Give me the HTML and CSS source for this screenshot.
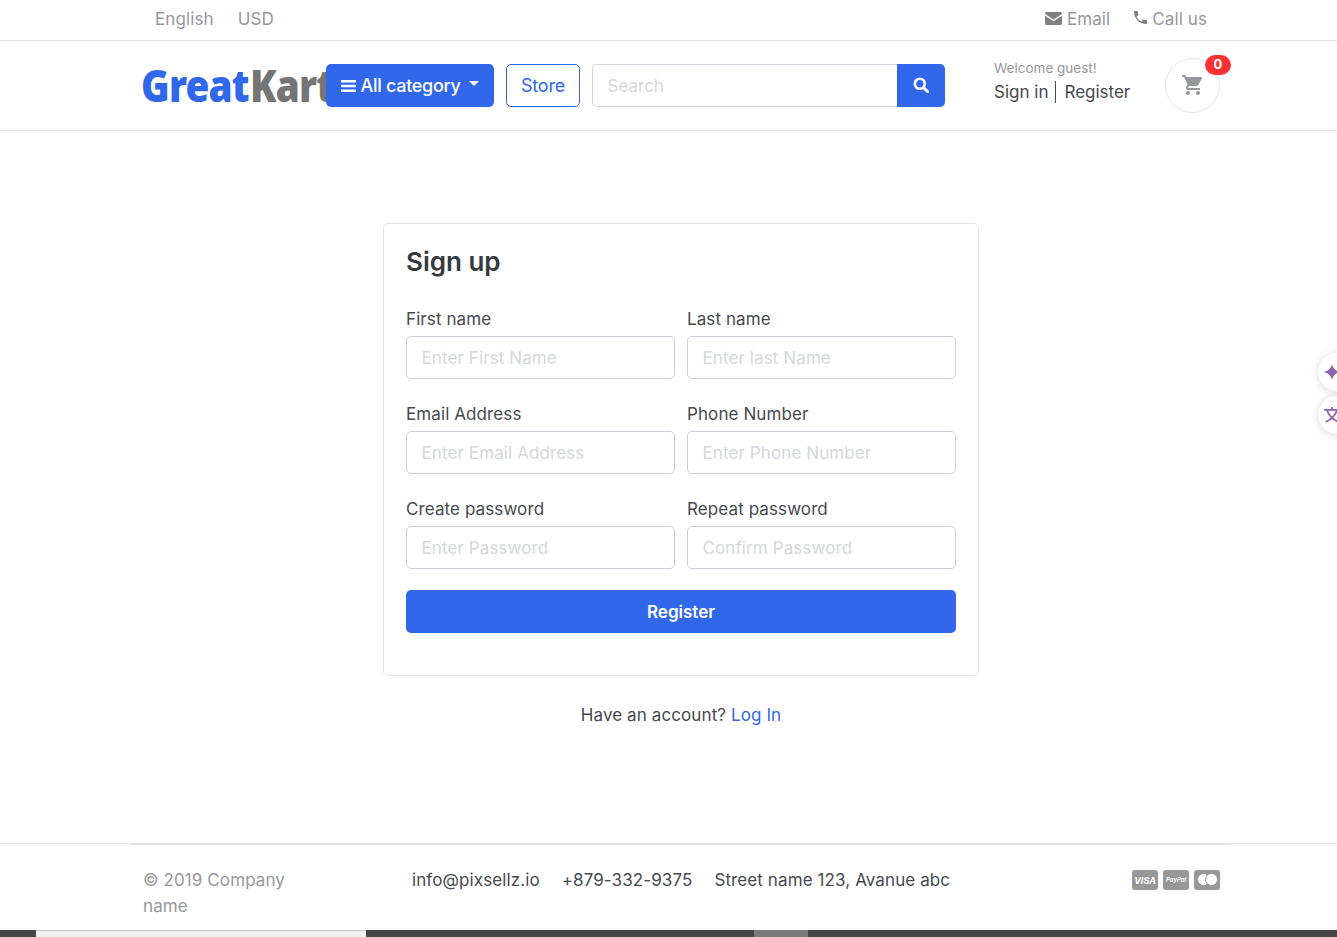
FILE: index.html
```html
<!DOCTYPE html>
<html lang="en">
<head>
    <meta charset="UTF-8">
    <meta name="viewport" content="width=device-width, initial-scale=1.0">
    <title>GreatKart | Sign up</title>
    <link rel="stylesheet" href="styles.css">
</head>
<body>
    <div class="page">
        <!-- Top bar -->
        <div class="topbar">
            <div class="container topbar-row">
                <div class="topbar-links">
                    <a href="#">English</a>
                    <a href="#">USD</a>
                </div>
                <div class="topbar-links">
                    <a href="#">
                        <svg class="icon-mail" viewBox="0 0 17 13"><path d="M1.5 0h14A1.5 1.5 0 0 1 17 1.500v.6L8.500 7.600 0 2.100v-.6A1.500 1.500 0 0 1 1.500 0z"/><path d="M0 3.700l8.500 5.500L17 3.700v7.800a1.500 1.500 0 0 1-1.500 1.500h-14A1.500 1.500 0 0 1 0 11.500z"/></svg>
                        Email
                    </a>
                    <a href="#">
                        <svg class="icon-phone" viewBox="3 3 18 18"><path d="M6.600 10.800c1.400 2.800 3.800 5.100 6.600 6.600l2.200-2.200c.3-.3.7-.4 1-.2 1.100.4 2.300.6 3.600.6.600 0 1 .4 1 1V20c0 .6-.4 1-1 1C10.600 21 3 13.400 3 4c0-.6.4-1 1-1h3.500c.6 0 1 .4 1 1 0 1.300.2 2.500.6 3.600.1.300 0 .7-.2 1z"/></svg>
                        Call us
                    </a>
                </div>
            </div>
        </div>

        <!-- Header -->
        <header class="header">
            <div class="container header-row">
                <a href="#" class="logo"><span class="logo-great">Great</span><span class="logo-kart">Kart</span></a>
                <button class="btn-category">
                    <svg class="icon-bars" viewBox="0 0 15 12"><path d="M0 0h15v2.400H0zM0 4.800h15v2.400H0zM0 9.600h15V12H0z"/></svg>
                    All category
                    <span class="caret"></span>
                </button>
                <a href="#" class="btn-store">Store</a>
                <div class="search">
                    <input type="text" placeholder="Search">
                    <button aria-label="Search">
                        <svg viewBox="0 0 16 16"><circle cx="6.800" cy="6.800" r="5" fill="none" stroke="#fff" stroke-width="2.600"/><path d="M10.500 10.500l4.200 4.200" stroke="#fff" stroke-width="3" stroke-linecap="round"/></svg>
                    </button>
                </div>
                <div class="account">
                    <small>Welcome guest!</small>
                    <div><a href="#">Sign in</a><span class="divider"></span><a href="#">Register</a></div>
                </div>
                <a href="#" class="cart">
                    <svg viewBox="1 2 21 20"><path d="M7 18c-1.100 0-1.990.9-1.990 2S5.900 22 7 22s2-.9 2-2-.9-2-2-2zM1 2v2h2l3.600 7.590-1.350 2.450c-.16.28-.25.61-.25.96 0 1.100.9 2 2 2h12v-2H7.420c-.14 0-.25-.11-.25-.25l.03-.12.9-1.630h7.450c.75 0 1.410-.41 1.750-1.030l3.580-6.490c.08-.14.12-.31.12-.48 0-.55-.45-1-1-1H5.210l-.94-2H1zm16 16c-1.100 0-1.990.9-1.990 2s.89 2 1.990 2 2-.9 2-2-.9-2-2-2z"/></svg>
                    <span class="badge">0</span>
                </a>
            </div>
        </header>

        <!-- Sign up form -->
        <main class="main">
            <div class="card">
                <h4>Sign up</h4>
                <form class="form-grid">
                    <div class="field">
                        <label>First name</label>
                        <input type="text" placeholder="Enter First Name">
                    </div>
                    <div class="field">
                        <label>Last name</label>
                        <input type="text" placeholder="Enter last Name">
                    </div>
                    <div class="field">
                        <label>Email Address</label>
                        <input type="text" placeholder="Enter Email Address">
                    </div>
                    <div class="field">
                        <label>Phone Number</label>
                        <input type="text" placeholder="Enter Phone Number">
                    </div>
                    <div class="field">
                        <label>Create password</label>
                        <input type="text" placeholder="Enter Password">
                    </div>
                    <div class="field">
                        <label>Repeat password</label>
                        <input type="text" placeholder="Confirm Password">
                    </div>
                    <button type="button" class="btn-register">Register</button>
                </form>
            </div>
            <p class="login-note">Have an account? <a href="#">Log In</a></p>
        </main>

        <!-- Footer -->
        <footer class="footer">
            <div class="container footer-row">
                <p class="copyright">&copy; 2019 Company name</p>
                <div class="contacts">
                    <span>info@pixsellz.io</span>
                    <span>+879-332-9375</span>
                    <span>Street name 123, Avanue abc</span>
                </div>
                <div class="payments">
                    <span class="pay pay-visa">VISA</span>
                    <span class="pay pay-paypal">PayPal</span>
                    <span class="pay pay-master"><i></i><i></i></span>
                </div>
            </div>
        </footer>

        <div class="bottom-strip"><span class="strip-light"></span><span class="strip-grey"></span></div>
    </div>

    <!-- Floating side buttons -->
    <div class="side-btn side-one">
        <svg viewBox="0 0 14 14"><path d="M7 0c.9 3.800 2.400 5.500 7 7-4.600 1.500-6.100 3.200-7 7-.9-3.800-2.400-5.500-7-7 4.600-1.500 6.100-3.200 7-7z"/></svg>
    </div>
    <div class="side-btn side-two">
        <svg viewBox="0 0 14 14"><path d="M0 2.500h14M7 0v2.500M2.500 2.500c1.500 5 5 8.500 10 10.500M11.500 2.500c-1.500 5-5 8.500-10 10.500" fill="none" stroke="#8a63ad" stroke-width="1.500"/></svg>
    </div>
</body>
</html>
```

FILE: styles.css
```css
/* General Styles */
html {
    overflow: hidden;
}

body {
    margin: 0;
    font-family: 'Inter', sans-serif;
    font-size: 17px;
    line-height: 26px;
    letter-spacing: 0.1px;
    color: #454a50;
    background: #fff;
}

a {
    color: inherit;
    text-decoration: none;
}

.page {
    width: 1362px;
    height: 937px;
    display: flex;
    flex-direction: column;
}

.container {
    width: 1100px;
    margin: 0 auto;
    padding: 0 12px;
    box-sizing: border-box;
}

/* Top bar */
.topbar {
    height: 41px;
    box-sizing: border-box;
    border-bottom: 1px solid #e4e4e4;
    width: 1337px;
}

.topbar .container {
    margin-left: 131px;
}

.topbar-row {
    display: flex;
    justify-content: space-between;
    height: 40px;
    align-items: center;
}

.topbar-links {
    display: flex;
    color: #96989b;
    margin-top: -3px;
}

.topbar-links a {
    padding: 0 12px;
    display: flex;
    align-items: center;
    gap: 5px;
}

.topbar-links svg {
    fill: #808080;
}

.icon-mail {
    width: 17px;
    height: 13px;
}

.icon-phone {
    width: 13px;
    height: 13px;
    margin-top: -3px;
}

/* Header */
.header {
    height: 90px;
    box-sizing: border-box;
    border-bottom: 1px solid #e4e4e4;
    width: 1337px;
}

.header .container {
    margin-left: 131px;
}

.header-row {
    display: flex;
    align-items: center;
    height: 89px;
    position: relative;
}

.logo {
    width: 183px;
    flex: none;
    white-space: nowrap;
    font-family: 'Noto Sans', sans-serif;
    font-weight: 900;
    font-size: 44px;
    line-height: 50px;
    letter-spacing: -1px;
    margin-top: -2px;
    text-indent: -1px;
}

.logo span {
    display: inline-block;
    transform-origin: left center;
}

.logo-great {
    color: #3167eb;
    width: 109px;
    transform: scaleX(0.88);
}

.logo-kart {
    color: #757575;
    transform: scaleX(0.88);
}

.btn-category {
    position: relative;
    width: 168px;
    height: 43px;
    flex: none;
    margin-right: 12px;
    margin-top: -1px;
    border: none;
    border-radius: 5px;
    background: #3167eb;
    color: #fff;
    font-family: inherit;
    font-size: 18px;
    font-weight: 500;
    letter-spacing: -0.3px;
    display: flex;
    align-items: center;
    justify-content: center;
    padding: 1px 0 0;
}

.icon-bars {
    width: 15px;
    height: 12px;
    fill: #fff;
    margin-right: 5px;
}

.caret {
    margin-left: 9px;
    margin-top: -4px;
    border-top: 5px solid #fff;
    border-left: 5px solid transparent;
    border-right: 5px solid transparent;
}

.btn-store {
    width: 74px;
    height: 43px;
    flex: none;
    box-sizing: border-box;
    margin-right: 12px;
    margin-top: -1px;
    padding-top: 1px;
    border: 1px solid #3167eb;
    border-radius: 5px;
    color: #3167eb;
    font-size: 18px;
    letter-spacing: -0.2px;
    display: flex;
    align-items: center;
    justify-content: center;
}

.search {
    width: 353px;
    height: 43px;
    flex: none;
    display: flex;
    margin-top: -1px;
}

.search input {
    flex: 1;
    min-width: 0;
    box-sizing: border-box;
    border: 1px solid #d1d5db;
    border-right: none;
    border-radius: 5px 0 0 5px;
    padding: 1px 14.500px 0;
    font-family: inherit;
    font-size: 17px;
    outline: none;
}

.search input::placeholder {
    color: #d4d7dc;
}

.search button {
    width: 48px;
    border: none;
    padding: 0;
    background: #3167eb;
    border-radius: 0 5px 5px 0;
    display: flex;
    align-items: center;
    justify-content: center;
}

.search svg {
    width: 16px;
    height: 16px;
}

.account {
    margin-left: 49px;
    width: 171px;
    flex: none;
    margin-top: -8px;
    letter-spacing: 0;
}

.account small {
    display: block;
    font-size: 13.500px;
    line-height: 20px;
    color: #96989b;
}

.account div {
    display: flex;
    align-items: center;
    line-height: 28px;
}

.divider {
    width: 1px;
    height: 22px;
    background: #454a50;
    margin: 0 8px 0 7px;
}

.cart {
    width: 55px;
    height: 55px;
    flex: none;
    box-sizing: border-box;
    border: 1px solid #e4e4e4;
    border-radius: 50%;
    display: flex;
    align-items: center;
    justify-content: center;
    position: relative;
    margin-top: -1px;
}

.cart svg {
    width: 21px;
    height: 20px;
    fill: #96989b;
}

.badge {
    position: absolute;
    top: -4px;
    right: -12px;
    width: 26px;
    height: 20px;
    border-radius: 10px;
    background: #fa3434;
    color: #fff;
    font-size: 13px;
    font-weight: 700;
    line-height: 19px;
    text-align: center;
}

/* Sign up card */
.main {
    flex: 1;
    padding-top: 92px;
}

.card {
    width: 596px;
    height: 453px;
    box-sizing: border-box;
    margin: 0 auto;
    padding: 22px;
    border: 1px solid #e4e4e4;
    border-radius: 5px;
}

.card h4 {
    margin: 0 0 28px;
    font-size: 26px;
    line-height: 32px;
    font-weight: 600;
    letter-spacing: 0;
    color: #343a40;
}

.form-grid {
    display: grid;
    grid-template-columns: minmax(0, 1fr) minmax(0, 1fr);
    column-gap: 12px;
    row-gap: 22px;
}

.field {
    display: flex;
    flex-direction: column;
}

.field label {
    line-height: 24px;
    padding-top: 1px;
    margin-bottom: 5px;
}

.field input {
    width: 100%;
    min-width: 0;
    height: 43px;
    box-sizing: border-box;
    border: 1px solid #ccd0d6;
    border-radius: 5px;
    padding: 0 14.500px;
    font-family: inherit;
    font-size: 17px;
    letter-spacing: 0.1px;
    outline: none;
}

.field input::placeholder {
    color: #d4d7dc;
}

.btn-register {
    grid-column: 1 / 3;
    height: 43px;
    margin-top: -1px;
    border: none;
    border-radius: 5px;
    background: #3167eb;
    color: #fff;
    font-family: inherit;
    font-size: 17px;
    font-weight: 600;
}

.login-note {
    margin: 26px 0 0;
    text-align: center;
}

.login-note a {
    color: #3167eb;
}

/* Footer */
.footer {
    height: 87px;
    box-sizing: border-box;
    position: relative;
    border-top: 1px solid #e4e4e4;
}

.footer-row {
    display: flex;
    align-items: flex-start;
    padding-top: 22px;
    border-top: 2px solid #e4e4e4;
    margin-top: -1px;
}

.copyright {
    width: 269px;
    padding-right: 110px;
    box-sizing: border-box;
    margin: 0;
    flex: none;
    color: #96989b;
}

.contacts {
    display: flex;
    gap: 22px;
}

.payments {
    margin-left: auto;
    margin-right: -1px;
    display: flex;
    gap: 5px;
    margin-top: 3px;
}

.pay {
    width: 26px;
    height: 20px;
    border-radius: 3px;
    background: #979797;
    color: #fff;
    display: flex;
    align-items: center;
    justify-content: center;
    font-size: 9px;
    line-height: 1;
    letter-spacing: 0;
    font-style: italic;
    font-weight: 700;
}

.pay-paypal {
    font-size: 6px;
    font-weight: 600;
}

.pay-master {
    padding-bottom: 2px;
    box-sizing: border-box;
}

.pay-master i {
    width: 13px;
    height: 13px;
    border-radius: 50%;
    background: #fff;
    border: 1px solid #979797;
    box-sizing: border-box;
    flex: none;
}

.pay-master i + i {
    margin-left: -5px;
}

.bottom-strip {
    height: 7px;
    width: 1337px;
    background: #464646;
    display: flex;
}

.strip-light {
    width: 330px;
    margin-left: 36px;
    background: #f0f0f0;
    border-top: 1px solid #c8c8c8;
}

.strip-grey {
    width: 54px;
    margin-left: 388px;
    background: #7a7a7a;
}

/* Floating side buttons */
.side-btn {
    position: fixed;
    left: 1318px;
    width: 40px;
    height: 38px;
    border-radius: 19px;
    background: #fff;
    box-shadow: 0 1px 8px rgba(0, 0, 0, 0.16);
    display: flex;
    align-items: center;
    padding-left: 6px;
    box-sizing: border-box;
}

.side-one {
    top: 353px;
}

.side-two {
    top: 396px;
}

.side-btn svg {
    width: 16px;
    height: 16px;
    flex: none;
    fill: #8a63ad;
}
```
